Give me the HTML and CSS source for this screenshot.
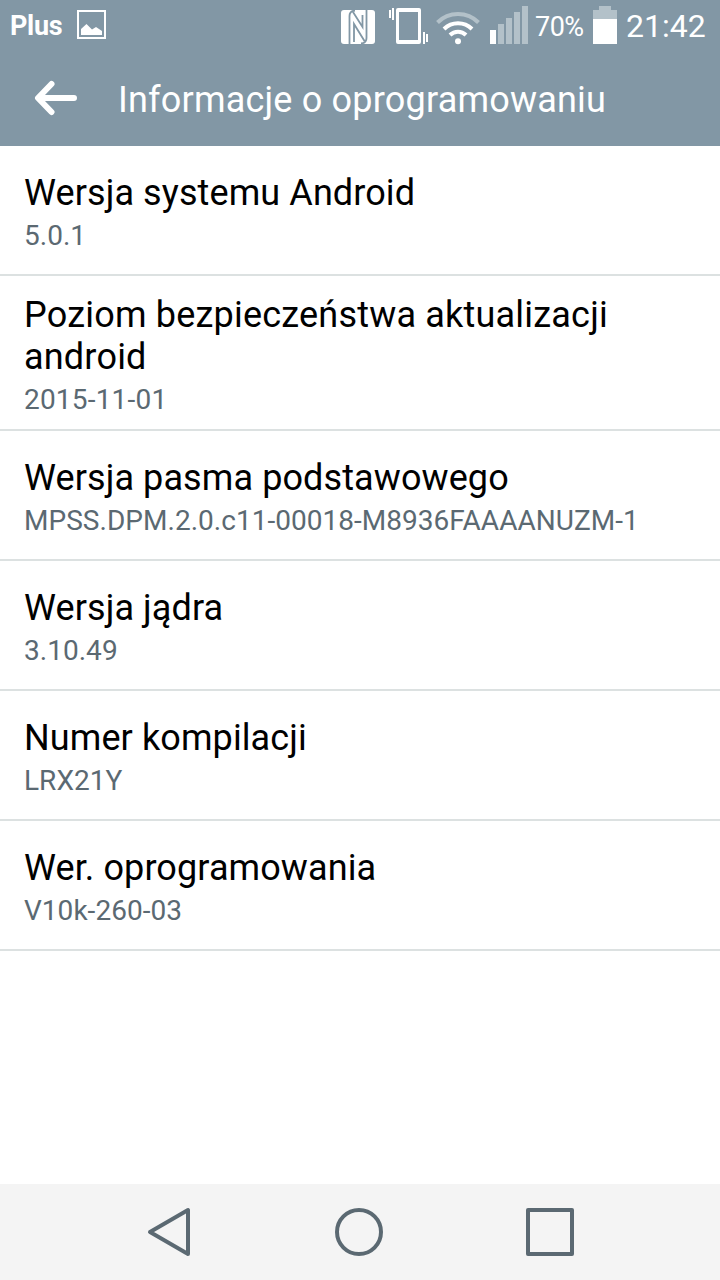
FILE: index.html
```html
<!DOCTYPE html>
<html lang="pl">
<head>
    <meta charset="UTF-8">
    <meta name="viewport" content="width=device-width, initial-scale=1.0">
    <title>Informacje o oprogramowaniu</title>
    <link rel="stylesheet" href="styles.css">
</head>
<body>
    <div class="screen">
        <header>
            <div class="status-bar">
                <span class="carrier">Plus</span>
                <svg class="picture" width="30" height="30" viewBox="0 0 30 30">
                    <rect x="1" y="1" width="27" height="27" fill="none" stroke="#fff" stroke-width="2"/>
                    <path d="M4 25V19L9.500 14L15 19.500L19 17L25 21V25Z" fill="#fff"/>
                </svg>
                <svg class="nfc" width="34" height="34" viewBox="0 0 34 34">
                    <rect width="34" height="34" rx="3" fill="#fff"/>
                    <path d="M8.500 34V6Q8.500 1 14 .5M12 2L21.500 17V5M25.500 0V28Q25.500 33 20 33.500M23.500 31L13 14V32" fill="none" stroke="#8297a5" stroke-width="1.800"/>
                </svg>
                <svg class="vibrate" width="40" height="38" viewBox="0 0 40 38">
                    <path d="M1 2V10M4 0V12M35 24V36M38 26V34" stroke="#fff" stroke-width="2"/>
                    <path fill-rule="evenodd" fill="#fff" d="M9 0H30Q32 0 32 2V34Q32 36 30 36H9Q7 36 7 34V2Q7 0 9 0ZM10 4V32H29V4Z"/>
                </svg>
                <svg class="wifi" width="44" height="34" viewBox="0 0 44 34" fill="none" stroke="#fff" stroke-width="4">
                    <path d="M1.500 11.500A29 29 0 0 1 42.500 11.500" stroke="#b3c1c9"/>
                    <path d="M8 18A20 20 0 0 1 36 18"/>
                    <path d="M14 24A11.500 11.500 0 0 1 30 24"/>
                    <circle cx="22" cy="30.300" r="3" fill="#fff" stroke="none"/>
                </svg>
                <svg class="signal" width="38" height="38" viewBox="0 0 38 38" fill="#b3c1c9">
                    <rect x="0" y="24" width="6" height="14" fill="#fff"/>
                    <rect x="8" y="18" width="6" height="20"/>
                    <rect x="16" y="12" width="6" height="26"/>
                    <rect x="24" y="6" width="6" height="32"/>
                    <rect x="32" y="0" width="6" height="38"/>
                </svg>
                <span class="percent">70%</span>
                <svg class="battery" width="24" height="38" viewBox="0 0 24 38">
                    <path d="M6 0H18V4H24V13H0V4H6Z" fill="#b3c1c9"/>
                    <rect y="13" width="24" height="25" fill="#fff"/>
                </svg>
                <span class="clock">21:42</span>
            </div>
            <div class="title-bar">
                <svg class="back" width="44" height="36" viewBox="0 0 44 36" fill="none" stroke="#fff" stroke-width="6" stroke-linecap="round" stroke-linejoin="round">
                    <path d="M17.500 4L4 18L17.500 32M5 18H40"/>
                </svg>
                <h1>Informacje o oprogramowaniu</h1>
            </div>
        </header>

        <ul class="list">
            <li>
                <h2>Wersja systemu Android</h2>
                <p>5.0.1</p>
            </li>
            <li class="tall">
                <h2>Poziom bezpieczeństwa aktualizacji android</h2>
                <p>2015-11-01</p>
            </li>
            <li>
                <h2>Wersja pasma podstawowego</h2>
                <p>MPSS.DPM.2.0.c11-00018-M8936FAAAANUZM-1</p>
            </li>
            <li>
                <h2>Wersja jądra</h2>
                <p>3.10.49</p>
            </li>
            <li>
                <h2>Numer kompilacji</h2>
                <p>LRX21Y</p>
            </li>
            <li>
                <h2>Wer. oprogramowania</h2>
                <p>V10k-260-03</p>
            </li>
        </ul>

        <nav>
            <svg width="44" height="50" viewBox="0 0 44 50">
                <path d="M3 25L41 3V47Z"/>
            </svg>
            <svg width="48" height="48" viewBox="0 0 48 48">
                <circle cx="24" cy="24" r="22"/>
            </svg>
            <svg width="48" height="48" viewBox="0 0 48 48">
                <rect x="2" y="2" width="44" height="44"/>
            </svg>
        </nav>
    </div>
</body>
</html>
```

FILE: styles.css
```css
* {
    box-sizing: border-box;
    margin: 0;
    padding: 0;
}
body {
    font-family: Roboto, sans-serif;
    background: #fff;
    color: #000;
}
svg {
    display: block;
    flex-shrink: 0;
}
.screen {
    display: flex;
    flex-direction: column;
    width: 720px;
    height: 1280px;
}
header {
    height: 146px;
    background: #8297a5;
    color: #fff;
}
.status-bar {
    display: flex;
    align-items: center;
    height: 50px;
    padding: 0 14px 0 10px;
    white-space: nowrap;
}
.carrier {
    width: 67px;
    padding-top: 2px;
    font-size: 27px;
    font-weight: 700;
    letter-spacing: -0.3px;
}
.nfc {
    margin-left: auto;
    margin-top: 3px;
}
.vibrate {
    margin-left: 14px;
    margin-top: 3px;
}
.wifi {
    margin-left: 7px;
    margin-top: 5px;
}
.signal {
    margin-left: 10px;
}
.percent {
    width: 50px;
    margin-left: 7px;
    padding-top: 3px;
    font-size: 27px;
    letter-spacing: -0.5px;
}
.battery {
    margin-left: 8px;
}
.clock {
    width: 80px;
    margin-left: 9px;
    padding-top: 2px;
    font-size: 32px;
}
.title-bar {
    display: flex;
    align-items: center;
    height: 96px;
    padding-left: 34px;
}
.back {
    margin-right: 40px;
}
h1 {
    padding-top: 4px;
    font-size: 36px;
    font-weight: 400;
    line-height: 42px;
    letter-spacing: 0.2px;
}
.list {
    flex: 1;
    list-style: none;
}
.list li {
    height: 130px;
    padding: 26px 24px 0;
    border-bottom: 2px solid #dce1e1;
}
.list .tall {
    height: 155px;
    padding-top: 18px;
}
h2 {
    font-size: 36px;
    font-weight: 400;
    line-height: 42px;
    letter-spacing: 0.1px;
}
.tall h2 {
    letter-spacing: 0.2px;
}
.list p {
    margin-top: 5px;
    font-size: 28px;
    line-height: 33px;
    letter-spacing: 0.03px;
    color: #5b6972;
}
.list .tall p {
    letter-spacing: 0.2px;
}
nav {
    display: flex;
    justify-content: space-between;
    align-items: center;
    height: 96px;
    padding: 0 146px 0 147px;
    background: #f4f4f4;
}
nav svg {
    fill: none;
    stroke: #5b6972;
    stroke-width: 4;
    stroke-linejoin: round;
}
```
